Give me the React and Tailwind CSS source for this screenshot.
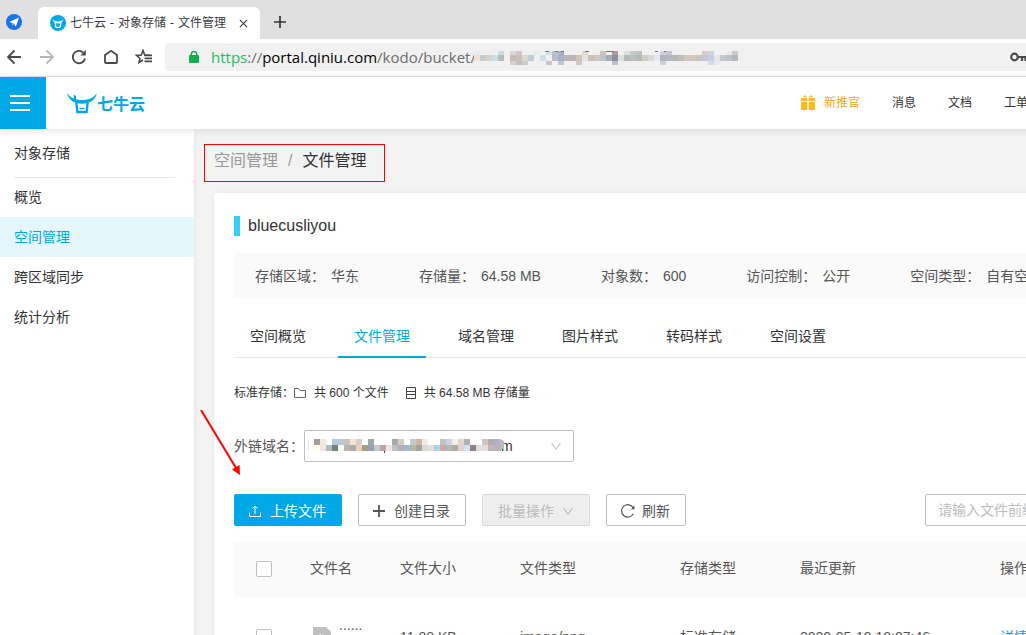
const CJK = "font-['Liberation_Sans','Noto_Sans_CJK_SC',sans-serif]";

const maskTop = [
  "#a39da0", "#f0e6e2", "", "#b0cae4", "#bdc5cf", "#c5c3c6", "#f6e3cc", "#d9cfcd", "", "#9da8a1", "", "", "", "#a9aaaa",
  "#d5ccc5", "", "#c3ccc4", "#d5b3a5", "#f3eae3", "", "", "#bbc5c3", "#cdd3e0", "#f4eee4", "#e0d8d0", "#b2adae", "", "",
  "#d0c5c2", "#b3adb3", "#b0b2c8",
];
const maskBottom = [
  "#ffffe8", "#f0e5e0", "#b0bcc2", "#7d7f7d", "#effff6", "#b7b8a3", "#adacab", "#ead2bb", "#a69d88", "#999fae", "#c2c8d2",
  "#c0a2a3", "#f0e4e2", "#bec0c6", "#b0afb3", "#a0bcd4", "#b3b7a0", "#a9a39b", "#d9d9d7", "#e0e0df", "#b0d1ea", "#c9abae",
  "#b5b8b5", "#b0aba3", "#e0d3cd", "#cfe4f3", "#977d84", "#dfdee5", "#e0dee4", "#c0b6b4", "#bcb1b4",
];

const urlTop = {
  1: "#e9efef", 5: "#cfdde2", 7: "#dadada", 8: "#d3c5bf", 11: "#e6ebee", 13: "#d4dfe4", 14: "#b9c2d2", 15: "#a9b3c6", 19: "#e2d8d0",
  22: "#d3c1b9", 24: "#a99c99", 26: "#dde0dc", 27: "#c6cbc8", 28: "#bfc3bb", 32: "#cdd2dc", 33: "#cbc4d0", 39: "#dccac0",
  40: "#cdd3e3", 43: "#e4ebf0", 44: "#cfcac3",
};
const urlMain = [
  "", "#f1e2cf", "#c7cbc6", "#d4d3c9", "#cfdee4", "#b6bdbf", "", "#c9bcb6", "#cbbfba", "#dcd7cf", "#bfcbcf", "",
  "#d0e0e8", "", "#b9bdc6", "#a8b1c5", "#b9b5ba", "#b9b3b8", "#d3c2b7", "#e3e3e0", "#c9bfb9", "#d2c8c0", "#b9c5cd", "#a8adae",
  "#8c8fa0", "#e0e0da", "#b3bbb9", "#b9c3c0", "#b7bab2", "#d2cfc9", "#d9d8d5", "#e3ecf2", "#b6b1bd", "#b5b7c4", "#b6b9ba",
  "#c5beb5", "#cec8c2", "#d5c7bf", "#c8c6c0", "#c6c8d6", "#c8d0de", "#e8e5e4", "#c4c9cb", "#bfc3c4", "#b1b8bf",
];
const urlBottom = {
  7: "#d9cfd3", 8: "#c6bdca", 9: "#cfcdca", 13: "#c5c6c6", 15: "#bfc6d1", 18: "#d5c8c3", 23: "#f6f2ee", 24: "#bcbec9",
  32: "#cdcfe0", 40: "#d3dce8", 41: "#e4ebf0",
};

function UrlMask() {
  const rows = [
    [2, 4, Object.entries(urlTop)],
    [6, 6, Object.entries(urlMain)],
    [12, 4, Object.entries(urlBottom)],
  ];
  return (
    <svg width="270" height="18" viewBox="0 0 270 18" shapeRendering="crispEdges" aria-hidden="true" className="-ml-2 mt-0.5 shrink-0">
      {rows.map(([y, h, cells]) =>
        cells.map(([i, fill]) =>
          fill ? <rect key={`${y}-${i}`} x={i * 6} y={y} width="6" height={h} fill={fill} /> : null
        )
      )}
      <path d="M77 2.500h4M87 2.500h3M93 2.500h3M117 2.500h4M138 2.500h8M187 2.500h3M196 2.500h2" stroke="#777" strokeWidth="1" />
    </svg>
  );
}

function SelectMask() {
  return (
    <svg width="202" height="16" viewBox="0 0 202 16" shapeRendering="crispEdges" aria-hidden="true" className="pointer-events-none absolute left-1 top-[9px]">
      <path d="M1 1a6 6 0 0 0 0 10z" fill="#e4e4e4" />
      {maskTop.map((c, i) => (c ? <rect key={i} x={6 + i * 6} y="0" width="6" height="6" fill={c} /> : null))}
      {maskBottom.map((c, i) => (
        <rect key={i} x={6 + i * 6} y="6" width="6" height="6" fill={c} />
      ))}
      <path d="M192 0q5 1 4 6q-1 5-4 6z" fill="#b9bcb6" />
      <rect x="76" y="12" width="1" height="2" fill="#513a5c" />
    </svg>
  );
}

function BullFace({ className }) {
  return (
    <svg viewBox="0 0 30 21" className={className} fill="none" aria-hidden="true">
      <path d="M0 0C3 4.500 8 7 15 7S27 4.500 30 0C28.500 6 24 10.800 15 10.800S1.500 6 0 0Z" fill="currentColor" />
      <path d="M6.800 1.500v5l2.200 1V3z" fill="currentColor" />
      <path d="M9.300 9.500l1.100 9.500h9.200l1.100-9.500" stroke="currentColor" strokeWidth="2.300" />
      <path d="M12.500 15.500h5" stroke="currentColor" strokeWidth="1.500" />
    </svg>
  );
}

function BrowserChrome() {
  return (
    <div className="font-['Open_Sans','Noto_Sans_CJK_SC',sans-serif]">
      <div className="flex h-[39px] items-end bg-[#e0e0e0]">
        <svg viewBox="0 0 16 16" className="mb-[9px] ml-1.5 size-4" aria-hidden="true">
          <circle cx="8" cy="8" r="8" fill="#1a73e8" />
          <path d="M13 3.500 9.800 12.800 7.900 9.500 3.300 8z" fill="#fff" />
          <path d="M7.900 9.500 6.500 12V9z" fill="#fff" />
        </svg>
        <div className="ml-4 flex h-8 w-[222px] items-center rounded-t-md bg-white pl-3 pr-3">
          <svg viewBox="0 0 16 16" className="size-4 shrink-0" aria-hidden="true">
            <circle cx="8" cy="8" r="8" fill="#00a8e6" />
            <path d="M2.500 4Q4 6.500 8 6.500T13.500 4Q12.500 8.600 8 8.600T2.500 4Z" fill="#fff" />
            <path d="M5.200 8l.5 3.500q.1.900 1 .9h2.600q.9 0 1-.9l.5-3.500" stroke="#fff" strokeWidth="1.300" fill="none" />
          </svg>
          <span className="ml-1 whitespace-nowrap font-['DejaVu_Sans','Noto_Sans_CJK_SC',sans-serif] text-xs leading-4 text-[#3c3c46]">七牛云 - 对象存储 - 文件管理</span>
          <button aria-label="关闭标签页" className="ml-auto">
            <svg viewBox="0 0 10 10" className="size-[9px]" stroke="#444" strokeWidth="1.400" aria-hidden="true">
              <path d="M1 1l8 8M9 1 1 9" />
            </svg>
          </button>
        </div>
        <button aria-label="新建标签页" className="mb-[11px] ml-3.5">
          <svg viewBox="0 0 12 12" className="size-3" stroke="#333" strokeWidth="1.700" aria-hidden="true">
            <path d="M6 0v12M0 6h12" />
          </svg>
        </button>
      </div>
      <div className="flex h-[38px] items-center border-b border-[#e6e6e6] bg-white pb-px pl-1.5 text-[#4a4a4a]">
        <div className="flex items-center gap-4">
          <button aria-label="后退">
            <svg viewBox="0 0 16 16" className="size-4" fill="none" stroke="currentColor" strokeWidth="1.800" aria-hidden="true">
              <path d="M15 8H2M8.500 1.500 2 8l6.500 6.500" />
            </svg>
          </button>
          <button aria-label="前进" className="text-[#b8b8b8]">
            <svg viewBox="0 0 16 16" className="size-4" fill="none" stroke="currentColor" strokeWidth="1.800" aria-hidden="true">
              <path d="M2 8h13M8.500 1.500 15 8l-6.500 6.500" />
            </svg>
          </button>
          <button aria-label="刷新页面">
            <svg viewBox="0 0 16 16" className="size-4" fill="none" stroke="currentColor" strokeWidth="1.800" aria-hidden="true">
              <path d="M15 9.500A6.200 6.200 0 1 1 13.300 3.600" />
              <path d="M15.800 1v5.500H10.300z" fill="currentColor" stroke="none" />
            </svg>
          </button>
          <button aria-label="主页">
            <svg viewBox="0 0 16 16" className="size-4" fill="none" stroke="currentColor" strokeWidth="1.800" aria-hidden="true">
              <path d="M3 6 9 1.800 15 6v7q0 1-1 1H4q-1 0-1-1z" />
            </svg>
          </button>
          <button aria-label="收藏">
            <svg viewBox="0 0 18 16" className="h-4 w-[18px]" fill="none" stroke="currentColor" strokeWidth="1.600" aria-hidden="true">
              <path d="M9 11 5 13.500 6 9.500 2.500 6.300h4.700L9 1.500l1.800 4.800H16" />
              <path d="M10.500 6.300H18M10.500 9.300H18M10.500 12.300H18" strokeWidth="1.800" />
            </svg>
          </button>
        </div>
        <div className="ml-[13px] flex h-7 flex-1 items-center rounded-l bg-[#f1f1f1] pl-6 pr-[252px]">
          <svg viewBox="0 0 10 12" className="h-3 w-2.5 shrink-0" aria-hidden="true">
            <rect y="4" width="10" height="8" rx="1" fill="#0cb04c" />
            <path d="M2.300 5V3.200a2.700 2.700 0 0 1 5.400 0V5" fill="none" stroke="#0cb04c" strokeWidth="1.400" />
          </svg>
          <span className="ml-3 whitespace-nowrap text-[15px] leading-5 text-[#6e6e6e]">
            <span className="text-[#1ec05c]">https</span>://<span className="text-black">portal.qiniu.com</span>/kodo/bucket/
          </span>
          <UrlMask />
          <svg viewBox="0 0 18 10" className="ml-auto h-2.5 w-[18px]" fill="none" stroke="#4a4a4a" strokeWidth="2.200" aria-hidden="true">
            <circle cx="4.500" cy="5" r="3.300" />
            <path d="M8 5h10M12 5v4M15.500 5v4" />
          </svg>
        </div>
      </div>
    </div>
  );
}

function Header() {
  return (
    <header className="relative z-10 flex h-[52px] items-center bg-white shadow-[0_1px_8px_rgba(0,0,0,0.12)]">
      <button aria-label="菜单" className="flex h-full w-[46px] flex-col items-start justify-center gap-[5px] bg-[#00a8e6] pl-2.5">
        <span className="h-0.5 w-5 bg-white" />
        <span className="h-0.5 w-5 bg-white" />
        <span className="h-0.5 w-5 bg-white" />
      </button>
      <a href="#home" className="ml-[21px] flex items-center text-[#00a8e6]">
        <BullFace className="h-[21px] w-[30px]" />
        <span className="pt-1 text-base leading-5 font-bold">七牛云</span>
      </a>
      <nav className="mr-[252px] ml-auto flex items-center gap-8 text-xs leading-5 text-[#333]">
        <a href="#promo" className="flex items-center gap-[9px] text-[#f5a623]">
          <svg viewBox="0 0 14 16" className="h-4 w-3.5" fill="#fdb92c" aria-hidden="true">
            <path d="M0 3h6.300v3H0zM7.700 3H14v3H7.700zM0 7h6.300v8H0zM7.700 7H14v8H7.700zM3.800 0l2.500 2.300H2.500zM10.200 0l1.300 2.300H7.700z" />
          </svg>
          新推官
        </a>
        <a href="#messages">消息</a>
        <a href="#docs">文档</a>
        <a href="#tickets">工单</a>
      </nav>
    </header>
  );
}

function Sidebar() {
  const items = ["概览", "空间管理", "跨区域同步", "统计分析"];
  return (
    <aside className="w-[194px] shrink-0 bg-white text-sm leading-5 text-[#333] shadow-[1px_0_4px_rgba(0,0,0,0.05)]">
      <h2 className="mr-5 ml-3.5 border-b border-[#e8e8e8] pt-3.5 pb-3.5">对象存储</h2>
      <nav className="-mt-px flex flex-col">
        {items.map((t) => (
          <a key={t} href={`#${t}`} className={`px-3.5 py-2.5 ${t === "空间管理" ? "bg-[#e5f6fd] text-[#00a8e6]" : ""}`}>
            {t}
          </a>
        ))}
      </nav>
    </aside>
  );
}

const info = [
  ["存储区域：", "华东"],
  ["存储量：", "64.58 MB"],
  ["对象数：", "600"],
  ["访问控制：", "公开"],
  ["空间类型：", "自有空间"],
];
const tabs = ["空间概览", "文件管理", "域名管理", "图片样式", "转码样式", "空间设置"];

const Chevron = ({ className }) => (
  <svg viewBox="0 0 10 8" className={`h-2 w-2.5 ${className}`} fill="none" stroke="currentColor" strokeWidth="1.100" aria-hidden="true">
    <path d="M.5 1 5 7l4.500-6" />
  </svg>
);

const box = "size-4 appearance-none rounded-xs border border-[#bfbfbf] bg-white align-middle";
const outline = "flex h-8 items-center rounded-xs border border-[#bfbfbf] bg-white pl-3.5 pr-[15px] pt-0.5 text-[#555]";

function FileTable() {
  return (
    <table className="mt-4 w-full table-fixed text-left whitespace-nowrap text-[#555]">
      <colgroup>
        <col className="w-[76px]" />
        <col className="w-[90px]" />
        <col className="w-[120px]" />
        <col className="w-40" />
        <col className="w-[120px]" />
        <col className="w-[200px]" />
        <col />
      </colgroup>
      <thead>
        <tr className="h-[55px] bg-[#fafafa]">
          <th className="pb-1 pl-[22px] font-normal"><input type="checkbox" aria-label="全选" className={box} /></th>
          {["文件名", "文件大小", "文件类型", "存储类型", "最近更新", "操作"].map((h) => (
            <th key={h} className="pb-1 font-normal">{h}</th>
          ))}
        </tr>
      </thead>
      <tbody>
        <tr className="h-20">
          <td className="pb-0.5 pl-[22px]"><input type="checkbox" aria-label="选择文件" className={box} /></td>
          <td>
            <div className="flex items-center gap-2 pl-[3px]">
              <svg viewBox="0 0 18 20" className="h-5 w-[18px]" aria-hidden="true">
                <path d="M0 0h13l5 5v15H0z" fill="#bfbfbf" />
                <path d="M3 16l4-10 3 6 2-2 3 6z" fill="#fff" />
              </svg>
              <span className="-mt-6">......</span>
            </div>
          </td>
          <td>11.88 KB</td>
          <td>image/png</td>
          <td>标准存储</td>
          <td>2020-05-19 18:07:46</td>
          <td><a href="#detail" className="text-[#00a8e6]">详情</a></td>
        </tr>
      </tbody>
    </table>
  );
}

export default function App() {
  return (
    <div className={`h-screen overflow-hidden bg-[#f3f3f3] text-sm leading-5 ${CJK}`}>
      <div className="flex min-h-full min-w-[1280px] flex-col">
        <BrowserChrome />
        <Header />
        <div className="flex flex-1">
          <Sidebar />
          <main className="min-w-0 flex-1 px-5">
            <nav className="relative flex h-16 items-center text-base leading-6">
              <a href="#spaces" className="text-[#999]">空间管理</a>
              <span className="mx-2.5 text-[#999]">/</span>
              <span className="text-[#333]">文件管理</span>
              <span className="absolute -left-2.5 top-[15px] h-[38px] w-[181px] border border-[#f00]" />
            </nav>
            <section className="relative bg-white px-5 pt-[23px] shadow-[0_0_4px_rgba(0,0,0,0.06)]">
              <div className="flex items-center gap-2">
                <span className="h-5 w-1.5 bg-[#35cff4]" />
                <h1 className="text-base leading-5 text-[#333]">bluecusliyou</h1>
              </div>
              <dl className="mt-[17px] flex h-[45px] items-center gap-15 bg-[#fafafa] px-[21px] whitespace-nowrap text-[#555]">
                {info.map(([k, v]) => (
                  <div key={k} className="flex gap-1.5">
                    <dt>{k}</dt>
                    <dd>{v}</dd>
                  </div>
                ))}
              </dl>
              <div role="tablist" className="flex h-15 items-end gap-4 border-b border-[#e8e8e8] text-[#333]">
                {tabs.map((t) => (
                  <button
                    key={t}
                    role="tab"
                    aria-selected={t === "文件管理"}
                    className={`-mb-px border-b-2 px-4 pb-2.5 ${t === "文件管理" ? "border-[#00a8e6] text-[#00a8e6]" : "border-transparent"}`}
                  >
                    {t}
                  </button>
                ))}
              </div>
              <div className="mt-[25px] flex items-center text-xs leading-5 text-[#333]">
                <span>标准存储：</span>
                <svg viewBox="0 0 12 10" className="h-2.5 w-3" fill="none" stroke="#666" aria-hidden="true">
                  <path d="M.5 9.500v-9H4.500l1.500 2h5.500v7z" />
                </svg>
                <span className="ml-2">共 600 个文件</span>
                <svg viewBox="0 0 10 12" className="ml-[17px] h-3 w-2.5" fill="none" stroke="#444" aria-hidden="true">
                  <path d="M.5.500h9v11h-9zM1 4.500h8M1 7.500h8" />
                </svg>
                <span className="ml-2">共 64.58 MB 存储量</span>
              </div>
              <div className="mt-[27px] flex items-center text-[#555]">
                <label htmlFor="domain">外链域名：</label>
                <div className="relative">
                  <select id="domain" className="h-8 w-[270px] appearance-none rounded-xs border border-[#bfbfbf] bg-white pl-[196px] text-[#333]">
                    <option>m</option>
                  </select>
                  <SelectMask />
                  <Chevron className="pointer-events-none absolute top-3 right-[13px] text-[#bfbfbf]" />
                </div>
              </div>
              <div className="mt-8 flex items-center gap-4">
                <button className="flex h-8 items-center rounded-xs bg-[#00a8e6] pt-0.5 pr-4 pl-[15px] text-white">
                  <svg viewBox="0 0 12 12" className="mr-[9px] size-3" fill="none" stroke="currentColor" aria-hidden="true">
                    <path d="M.5 7.500v4h11v-4M6 9V1M3.500 3.500 6 1l2.500 2.500" />
                  </svg>
                  上传文件
                </button>
                <button className={outline}>
                  <svg viewBox="0 0 12 12" className="mr-[9px] size-3" stroke="currentColor" strokeWidth="1.800" aria-hidden="true">
                    <path d="M6 0v12M0 6h12" />
                  </svg>
                  创建目录
                </button>
                <button disabled className="flex h-8 items-center rounded-xs border border-[#d9d9d9] bg-[#eee] pt-0.5 pr-4 pl-[15px] text-[#bbb]">
                  批量操作
                  <Chevron className="ml-[9px]" />
                </button>
                <button className={outline}>
                  <svg viewBox="0 0 14 14" className="mr-[7px] size-3.5" fill="none" stroke="currentColor" strokeWidth="1.200" aria-hidden="true">
                    <path d="M12.300 9.800A6.200 6.200 0 1 1 12.300 4" />
                    <path d="M13.500 1.500V5.200H9.800z" fill="currentColor" stroke="none" />
                  </svg>
                  刷新
                </button>
                <input
                  aria-label="文件前缀"
                  placeholder="请输入文件前缀搜索"
                  className="ml-auto h-8 w-[315px] rounded-xs border border-[#bfbfbf] px-3 placeholder:text-[#bbb]"
                />
              </div>
              <FileTable />
              <svg viewBox="0 0 42 66" className="pointer-events-none absolute top-[217px] -left-3.5 h-[66px] w-[42px]" aria-hidden="true">
                <path d="M1 0 36 58" stroke="#f00" strokeWidth="2" />
                <path d="M40 65 32 59.500 39.500 55z" fill="#f00" />
              </svg>
            </section>
          </main>
        </div>
      </div>
    </div>
  );
}
